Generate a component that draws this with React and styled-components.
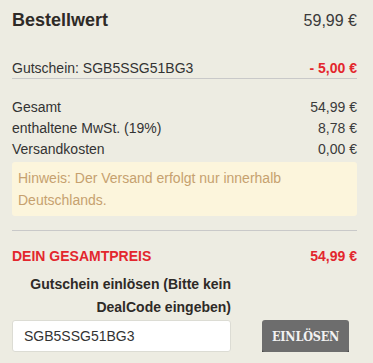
import React from 'react';
import styled, { createGlobalStyle } from 'styled-components';

const GlobalStyle = createGlobalStyle`
    html, body {
        margin: 0;
        padding: 0;
        background: #edece2;
    }
    body {
        font-family: "Liberation Sans", Arial, sans-serif;
        color: #333;
    }
`;

const Summary = styled.div`
    width: 373px;
    box-sizing: border-box;
    padding: 0 16px 0 12px;
    background: #edece2;
`;

const HeadRow = styled.div`
    display: flex;
    justify-content: space-between;
    align-items: center;
    height: 40px;
    padding-top: 1px;
    box-sizing: border-box;
`;

const Title = styled.span`
    font-size: 18px;
    font-weight: bold;
    color: #2e2a27;
`;

const Row = styled.div`
    display: flex;
    justify-content: space-between;
    align-items: center;
    font-size: 14px;
    line-height: ${(p) => p.$lh || 21}px;
    padding-top: ${(p) => p.$top || 0}px;
    border-bottom: ${(p) => (p.$divided ? '1px solid #c9c9c9' : 'none')};
    color: ${(p) => (p.$red ? '#e3262d' : '#333')};
    font-weight: ${(p) => (p.$bold ? 'bold' : 'normal')};
`;

const Value = styled.span`
    color: ${(p) => (p.$red ? '#e3262d' : '#3a3a3a')};
    font-weight: ${(p) => (p.$bold ? 'bold' : 'normal')};
`;

const Notice = styled.div`
    margin-top: 2px;
    padding: 5px 6px;
    background: #fcf5dc;
    border-radius: 3px;
    color: #c6a16f;
    font-size: 14px;
    line-height: 22px;
`;

const Divider = styled.hr`
    margin: 14px 0 0;
    border: 0;
    border-top: 1px solid #c9c9c9;
`;

const CouponForm = styled.form`
    display: grid;
    grid-template-columns: 219px auto;
    column-gap: 31px;
    align-items: start;
    padding-top: 7px;
`;

const CouponLabel = styled.label`
    grid-column: 1;
    text-align: right;
    font-size: 14px;
    font-weight: bold;
    line-height: 23px;
    color: #2e2a27;
    margin-bottom: 1px;
`;

const CouponInput = styled.input`
    grid-column: 1;
    height: 32px;
    box-sizing: border-box;
    padding: 0 11px;
    border: 1px solid #dcdcd4;
    border-radius: 3px;
    background: #fff;
    font-family: "Liberation Sans", Arial, sans-serif;
    font-size: 14px;
    color: #333;
    outline: none;
`;

const SubmitButton = styled.button`
    grid-column: 2;
    width: 87px;
    height: 32px;
    border: 0;
    border-radius: 3px;
    background: #6d6d6d;
    box-shadow: 0 3px 0 #454545;
    color: #f2f2f2;
    font-family: "DejaVu Serif Condensed", "DejaVu Serif", serif;
    font-weight: bold;
    font-size: 12.5px;
    letter-spacing: -0.2px;
    cursor: pointer;
`;

export default function App() {
    return (
        <Summary>
            <GlobalStyle />
            <HeadRow>
                <Title>Bestellwert</Title>
                <Value>59,99 €</Value>
            </HeadRow>
            <Row $top={18} $lh={20} $divided>
                <span>Gutschein: SGB5SSG51BG3</span>
                <Value $red $bold>- 5,00 €</Value>
            </Row>
            <Row $top={18}>
                <span>Gesamt</span>
                <Value>54,99 €</Value>
            </Row>
            <Row>
                <span>enthaltene MwSt. (19%)</span>
                <Value>8,78 €</Value>
            </Row>
            <Row>
                <span>Versandkosten</span>
                <Value>0,00 €</Value>
            </Row>
            <Notice>Hinweis: Der Versand erfolgt nur innerhalb Deutschlands.</Notice>
            <Divider />
            <Row $top={15} $lh={20} $red $bold>
                <span>DEIN GESAMTPREIS</span>
                <Value $red $bold>54,99 €</Value>
            </Row>
            <CouponForm onSubmit={(e) => e.preventDefault()}>
                <CouponLabel htmlFor="coupon">Gutschein einlösen (Bitte kein DealCode eingeben)</CouponLabel>
                <CouponInput id="coupon" defaultValue="SGB5SSG51BG3" />
                <SubmitButton type="submit">EINLÖSEN</SubmitButton>
            </CouponForm>
        </Summary>
    );
}
